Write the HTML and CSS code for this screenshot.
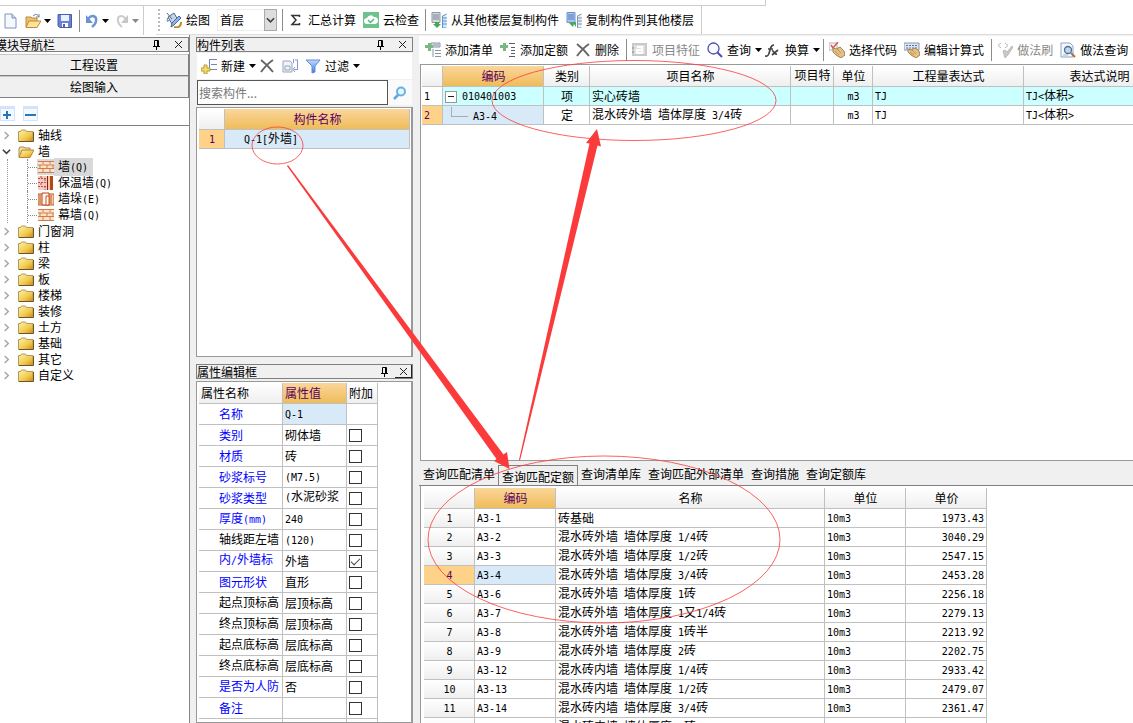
FILE: index.html
```html
<!DOCTYPE html>
<html lang="zh-CN">
<head>
<meta charset="utf-8">
<title>构件列表</title>
<link rel="stylesheet" href="styles.css">
</head>
<body>
<svg class="defs" width="0" height="0" aria-hidden="true">
<defs>
<linearGradient id="gold" x1="0" y1="0" x2="1" y2="1"><stop offset="0" stop-color="#fff3a8"/><stop offset=".6" stop-color="#f2c84e"/><stop offset="1" stop-color="#c98a1c"/></linearGradient>
<linearGradient id="blue" x1="0" y1="0" x2="0" y2="1"><stop offset="0" stop-color="#c5dcf8"/><stop offset="1" stop-color="#3f78d8"/></linearGradient>
<symbol id="folder" viewBox="0 0 16 14"><path d="M.5 12.500v-10h2l1-1.500h4l1 1.500H15v10z" fill="url(#gold)" stroke="#b29a55"/><path d="M1 12.500h14.500V3" fill="none" stroke="#70561d"/></symbol>
<symbol id="folder-open" viewBox="0 0 16 14"><path d="M1 12V3l1-1h4l1 1h5v2" fill="#f5dda0" stroke="#a98d48"/><path d="M1 12.5L4 5h12l-4 7.500z" fill="url(#gold)" stroke="#b28830"/></symbol>
<symbol id="chev" viewBox="0 0 8 10"><path d="M2 1l4 4-4 4" fill="none" stroke="#a6a6a6" stroke-width="1.600"/></symbol>
<symbol id="chev-down" viewBox="0 0 10 8"><path d="M1 2l4 4 4-4" fill="none" stroke="#404040" stroke-width="1.800"/></symbol>
<symbol id="bricks" viewBox="0 0 16 14"><path d="M0 1h16v12H0z" fill="#fbe3c8"/><path d="M0 1.500h16M0 5h16M0 8.500h16M0 12.500h16M5 1v3M12 1v3M2 5v3M9 5v3M15 5v3M5 9v3M12 9v3" stroke="#d07a50" fill="none"/></symbol>
<symbol id="bricks-insulated" viewBox="0 0 16 14"><path d="M0 0h10v14H0z" fill="#f3cdc0"/><path d="M0 2.500h9M0 6.500h9M0 10.500h9M3 0v3M7 3v3M3 7v3M7 10v4" stroke="#b84a4a" stroke-dasharray="2 1"/><path d="M10 0h2v14h-2z" fill="#f4c9a0"/><path d="M12 0h3v14h-3z" fill="#b8481c"/><path d="M9.500 0v14" stroke="#8c1c1c"/></symbol>
<symbol id="pier" viewBox="0 0 16 14"><path d="M0 2h16v11H0z" fill="#f5cda5" stroke="#bd5a2c"/><path d="M4 1h7v12H4z" fill="#fff3ea" stroke="#b04a20"/><path d="M8 4h3v9H8zM13 3v9M2 3v9" fill="#fff" stroke="#c8552a"/></symbol>
<symbol id="cross" viewBox="0 0 16 16"><path d="M2 2c4 3 8 7 12 12M14 2C9 5 5 10 2 14" fill="none" stroke="#666" stroke-width="2"/></symbol>
<symbol id="caret" viewBox="0 0 7 4"><path d="M0 0h7L3.500 4z" fill="currentColor"/></symbol>
<symbol id="pin" viewBox="0 0 9 10"><path d="M2.500 6V.5h4V6M5.500 1v5M1 6.500h7M4.500 7v3" fill="none" stroke="#000"/></symbol>
<symbol id="close" viewBox="0 0 9 9"><path d="M1 1l7 7M8 1L1 8" fill="none" stroke="#222"/></symbol>
<symbol id="new" viewBox="0 0 16 16"><path d="M3 1h7l4 4v10H3z" fill="#f4f9ff" stroke="#8095b5"/><path d="M10 1v4h4" fill="#c9d8ee" stroke="#8095b5"/></symbol>
<symbol id="open" viewBox="0 0 16 16"><path d="M1 14V4h5l1 1h5v3" fill="#eec06a" stroke="#c0883c"/><path d="M1 14.500L4 8h12l-4 6.500z" fill="#ffe39a" stroke="#c0883c"/><path d="M8 3c3-3 5-1 6 1M14 1v3h-3" fill="none" stroke="#6a86a8"/></symbol>
<symbol id="save" viewBox="0 0 16 16"><path d="M1 1.500h13.500v13H3L1 13z" fill="#6b80d4" stroke="#4c5cac"/><path d="M4 2h8v6H4z" fill="#e8f0fc"/><path d="M5 10h6v4H5z" fill="#fff"/><path d="M6 11h2v3H6z" fill="#4c60b4"/></symbol>
<symbol id="undo" viewBox="0 0 14 14"><path d="M3 5c4-5 9-3 8 2 0 3-3 5-4 6" fill="none" stroke="#6c92d4" stroke-width="2.400"/><path d="M1 1v8h7z" fill="#6c92d4"/></symbol>
<symbol id="redo" viewBox="0 0 14 14"><path d="M11 5C7 0 2 2 3 7c0 3 3 5 4 6" fill="none" stroke="#ccc" stroke-width="2"/><path d="M13 1v8H6z" fill="#c6c6c6"/></symbol>
<symbol id="paint" viewBox="0 0 16 16"><path d="M2 5l6-4 4 7-6 4z" fill="#c4d3e8" stroke="#52698c"/><path d="M1 1l5 6M2 6c-2 3 0 5 1 2" fill="none" stroke="#52698c"/><path d="M15 6l-7 7-3 2 1-4 7-7z" fill="#90b4e4" stroke="#44699f"/><path d="M8 15c4 1 7 0 7-5" fill="none" stroke="#c48b36" stroke-width="2"/></symbol>
<symbol id="sigma" viewBox="0 0 16 16"><path d="M11.500 5V3.500H4L8 8l-4 4.500h7.500V11" fill="none" stroke="#333" stroke-width="1.500"/></symbol>
<symbol id="cloud" viewBox="0 0 16 16"><path d="M0 0h16v16H0z" fill="#6cc48c"/><path d="M4 12a3 3 0 0 1 0-6 4 4 0 0 1 7-1 3.500 3.500 0 0 1 1 7z" fill="#fff"/><path d="M5 8l2.500 2.500L11 7" fill="none" stroke="#55bb7c" stroke-width="1.500"/></symbol>
<symbol id="floor-copy" viewBox="0 0 16 16"><path d="M1 .5h8v10H1z" fill="#d5dae0" stroke="#8e979f"/><path d="M2 3h6M2 5h6M2 7h6" stroke="#7b848e"/><path d="M15.500 2l-4 2v12h4M12 6h4M12 9h4M12 12h4" fill="#d4e6fa" stroke="#5f93ce"/><path d="M4 10v2H2l4 4 4-4H8v-2z" fill="#46a85c"/></symbol>
<symbol id="floor-paste" viewBox="0 0 16 16"><path d="M1 .5h8v10H1z" fill="#a9c5ef" stroke="#6d92cc"/><path d="M2 3h6M2 5h6M2 7h6" stroke="#587fbd"/><path d="M15.500 2l-4 2v12h4M12 6h4M12 9h4M12 12h4" fill="#e4edf6" stroke="#7e93ad"/><path d="M3 11l4 4 1-3 2 3v-5H7z" fill="#46a85c"/></symbol>
<symbol id="add-list" viewBox="0 0 16 16"><path d="M6 1h9v4H6z" fill="#dfe5ee" stroke="#8894a8"/><path d="M8 3h6M10 8.500h6M10 11.500h6M10 14.500h6M8 7v8" stroke="#8994a5"/><path d="M3 1h3v2h2v3H6v3H3V6H0V3h3z" fill="#79b981"/></symbol>
<symbol id="add-quota" viewBox="0 0 16 16"><path d="M9 1.500h6M11 5.500h4M11 8.500h4M11 11.500h4M9 14.500h6" stroke="#555d69"/><path d="M3 1h3v2h2v3H6v3H3V6H0V3h3z" fill="#79b981"/></symbol>
<symbol id="feature" viewBox="0 0 16 16"><path d="M0 1h15v13H0z" fill="#c9c9c9"/><path d="M2 3h11v9H2z" fill="#e0e0e0"/><path d="M5 5h5v6H5V8h4" fill="none" stroke="#fff" stroke-width="2"/><path d="M0 5h2v2H0zM0 9h2v2H0z" fill="#aaa"/></symbol>
<symbol id="search" viewBox="0 0 16 16"><circle cx="6.500" cy="6.500" r="5.500" fill="#fafaff" stroke="#4c50b0" stroke-width="1.300"/><path d="M10.500 10.500L15 15" stroke="#4c50b0" stroke-width="2"/></symbol>
<symbol id="fx" viewBox="0 0 16 16"><path d="M0 14c4 1 4-3 5-6s1-5 4-5M3 7h5M7 9c2-1 2 4 5 3M13 8l-6 5" fill="none" stroke="#444" stroke-width="1.700"/></symbol>
<symbol id="hand-code" viewBox="0 0 16 16"><path d="M0 1h8v7H0z" fill="#f3f6fb" stroke="#abb8c9"/><path d="M2 3l2 3 5-6" fill="none" stroke="#dc5a48" stroke-width="1.500"/><path d="M4 6l3 1 4-2 4 4 1 4-4 3-5-3-3-3z" fill="#e4c184" stroke="#a68352"/><path d="M6 9l4 4M8 7l4 4" stroke="#b99256"/></symbol>
<symbol id="hand-edit" viewBox="0 0 16 16"><path d="M0 1h15v7H0z" fill="#dce5f3" stroke="#8399b8"/><path d="M2 3.500h11M2 6h11" stroke="#5d7598" stroke-dasharray="2 1"/><path d="M4 7l3 1 4-2 4 3 1 4-4 3-5-3-3-3z" fill="#e4c184" stroke="#a68352"/><path d="M6 10l4 3M8 8l4 4" stroke="#b99256"/></symbol>
<symbol id="brush" viewBox="0 0 16 16"><path d="M4 1L1 3.500 4 6M8 1l3 2.500L8 6" fill="none" stroke="#b6b6b6"/><path d="M6 9l2-1 2 2 5-6 1 1-5 8-3 3z" fill="#c8c8c8" stroke="#bcbcbc"/></symbol>
<symbol id="page-search" viewBox="0 0 16 16"><path d="M2 1h8l3 3v11H1V1z" fill="#f4f9ff" stroke="#8ba5ca"/><circle cx="8" cy="8" r="3.500" fill="#bcd7ee" stroke="#516d94" stroke-width="1.300"/><path d="M3 13h5" stroke="#9db4d2"/><path d="M11 11l4 4" stroke="#a8743c" stroke-width="2"/></symbol>
<symbol id="create" viewBox="0 0 16 16"><path d="M8 1.500h8M10 6.500h6M8 11.500h8M8.500 1v11" stroke="#7189ae"/><path d="M3 7h3v3h3v3H6v3H3v-3H0v-3h3z" fill="#f2dc69" stroke="#b99b35"/></symbol>
<symbol id="copy" viewBox="0 0 16 16"><path d="M1 3h7l2 2v9H1zM3 8h5v4H3z" fill="#f0f3f8" stroke="#99a5b9"/><path d="M11.500 1v4M15.500 2v10M15 11.500h-3M13 9l-2 2.500 2 2.500M13 2h3" fill="none" stroke="#829bcc"/></symbol>
<symbol id="filter" viewBox="0 0 16 16"><path d="M1 2h14L10 8v6l-3 1V8z" fill="url(#blue)" stroke="#5d8ede"/></symbol>
<symbol id="find" viewBox="0 0 16 16"><path d="M7 9l-5 5" stroke="#5ba7df" stroke-width="2.500"/><circle cx="9" cy="6.500" r="4" fill="#eaf6ff" stroke="#64b0e8" stroke-width="2"/></symbol>
</defs>
</svg>

<div class="menu-edge"></div>
<header class="bars">
  <div class="toolbar file-bar">
    <button class="tool" aria-label="新建文件"><svg class="ic"><use href="#new"/></svg></button>
    <button class="tool tight" aria-label="打开"><svg class="ic"><use href="#open"/></svg><svg class="caret"><use href="#caret"/></svg></button>
    <button class="tool" aria-label="保存"><svg class="ic"><use href="#save"/></svg></button>
    <span class="sep"></span>
    <button class="tool tight" aria-label="撤销"><svg class="ic small"><use href="#undo"/></svg><svg class="caret"><use href="#caret"/></svg></button>
    <button class="tool tight dim" aria-label="恢复"><svg class="ic small"><use href="#redo"/></svg><svg class="caret"><use href="#caret"/></svg></button>
  </div>
  <div class="toolbar draw-bar">
    <span class="grip"></span>
    <button class="tool"><svg class="ic"><use href="#paint"/></svg>绘图</button>
    <span class="floor"><select aria-label="楼层"><option>首层</option></select><svg class="floor-arrow"><use href="#chev-down"/></svg></span>
    <span class="sep"></span>
    <button class="tool"><svg class="ic"><use href="#sigma"/></svg>汇总计算</button>
    <button class="tool"><svg class="ic"><use href="#cloud"/></svg>云检查</button>
    <span class="sep"></span>
    <button class="tool"><svg class="ic"><use href="#floor-copy"/></svg>从其他楼层复制构件</button>
    <button class="tool"><svg class="ic"><use href="#floor-paste"/></svg>复制构件到其他楼层</button>
  </div>
</header>

<main class="work">
  <aside class="nav">
    <div class="title nav-title"><h2>模块导航栏</h2><button aria-label="固定"><svg class="pin"><use href="#pin"/></svg></button><button aria-label="关闭"><svg class="close"><use href="#close"/></svg></button></div>
    <button class="section">工程设置</button>
    <button class="section">绘图输入</button>
    <div class="fold">
      <button aria-label="全部展开"><svg viewBox="0 0 15 15"><path d="M0 0h15v15H0z" fill="#d4e3fb"/><path d="M1 3h13v11H1z" fill="#f4f8ff"/><path d="M7 5v8M3 9h8" stroke="#2677b8" stroke-width="2"/></svg></button>
      <button aria-label="全部折叠"><svg viewBox="0 0 15 15"><path d="M0 0h15v15H0z" fill="#d4e3fb"/><path d="M1 3h13v11H1z" fill="#f4f8ff"/><path d="M2 9h11" stroke="#2677b8" stroke-width="2"/></svg></button>
    </div>
    <ul class="tree">
      <li><svg class="chev"><use href="#chev"/></svg><svg class="fi"><use href="#folder"/></svg>轴线</li>
      <li><svg class="chev"><use href="#chev-down"/></svg><svg class="fi"><use href="#folder-open"/></svg>墙
        <ul class="branch">
          <li class="picked"><svg class="fi"><use href="#bricks"/></svg><span class="label">墙<span class="n">(Q)</span></span></li>
          <li><svg class="fi"><use href="#bricks-insulated"/></svg><span class="label">保温墙<span class="n">(Q)</span></span></li>
          <li><svg class="fi"><use href="#pier"/></svg><span class="label">墙垛<span class="n">(E)</span></span></li>
          <li><svg class="fi"><use href="#bricks"/></svg><span class="label">幕墙<span class="n">(Q)</span></span></li>
        </ul>
      </li>
      <li><svg class="chev"><use href="#chev"/></svg><svg class="fi"><use href="#folder"/></svg>门窗洞</li>
      <li><svg class="chev"><use href="#chev"/></svg><svg class="fi"><use href="#folder"/></svg>柱</li>
      <li><svg class="chev"><use href="#chev"/></svg><svg class="fi"><use href="#folder"/></svg>梁</li>
      <li><svg class="chev"><use href="#chev"/></svg><svg class="fi"><use href="#folder"/></svg>板</li>
      <li><svg class="chev"><use href="#chev"/></svg><svg class="fi"><use href="#folder"/></svg>楼梯</li>
      <li><svg class="chev"><use href="#chev"/></svg><svg class="fi"><use href="#folder"/></svg>装修</li>
      <li><svg class="chev"><use href="#chev"/></svg><svg class="fi"><use href="#folder"/></svg>土方</li>
      <li><svg class="chev"><use href="#chev"/></svg><svg class="fi"><use href="#folder"/></svg>基础</li>
      <li><svg class="chev"><use href="#chev"/></svg><svg class="fi"><use href="#folder"/></svg>其它</li>
      <li><svg class="chev"><use href="#chev"/></svg><svg class="fi"><use href="#folder"/></svg>自定义</li>
    </ul>
  </aside>

  <div class="middle">
    <section class="dock">
      <div class="title"><h2>构件列表</h2><button aria-label="固定"><svg class="pin"><use href="#pin"/></svg></button><button aria-label="关闭"><svg class="close"><use href="#close"/></svg></button></div>
      <div class="toolbar list-bar">
        <button class="tool split"><svg class="ic"><use href="#create"/></svg>新建<svg class="caret"><use href="#caret"/></svg></button>
        <button class="tool" aria-label="删除构件"><svg class="ic"><use href="#cross"/></svg></button>
        <button class="tool" aria-label="复制"><svg class="ic"><use href="#copy"/></svg></button>
        <button class="tool"><svg class="ic"><use href="#filter"/></svg>过滤<svg class="caret"><use href="#caret"/></svg></button>
      </div>
      <div class="find"><input type="text" aria-label="搜索构件" placeholder="搜索构件..."><button aria-label="搜索"><svg class="ic"><use href="#find"/></svg></button></div>
      <div class="sheet">
        <table class="grid parts">
          <colgroup><col class="w26"><col></colgroup>
          <thead><tr><th></th><th class="hot">构件名称</th></tr></thead>
          <tbody><tr><th class="hot-row"><span class="n">1</span></th><td class="sel"><span class="n">Q-1[</span>外墙<span class="n">]</span></td></tr></tbody>
        </table>
      </div>
    </section>
    <section class="dock">
      <div class="title raised"><h2>属性编辑框</h2><button aria-label="固定"><svg class="pin"><use href="#pin"/></svg></button><button class="boxed" aria-label="关闭"><svg class="close"><use href="#close"/></svg></button></div>
      <div class="sheet">
        <table class="grid props">
          <colgroup><col class="w84"><col class="w64"><col class="w31"></colgroup>
          <thead><tr><th>属性名称</th><th class="hot">属性值</th><th>附加</th></tr></thead>
          <tbody>
            <tr><th>名称</th><td class="sel"><span class="n">Q-1</span></td><td></td></tr>
            <tr><th>类别</th><td>砌体墙</td><td><input type="checkbox" aria-label="附加 类别"></td></tr>
            <tr><th>材质</th><td>砖</td><td><input type="checkbox" aria-label="附加 材质"></td></tr>
            <tr><th>砂浆标号</th><td><span class="n">(M7.5)</span></td><td><input type="checkbox" aria-label="附加 砂浆标号"></td></tr>
            <tr><th>砂浆类型</th><td class="upper"><span class="n">(</span>水泥砂浆</td><td><input type="checkbox" aria-label="附加 砂浆类型"></td></tr>
            <tr><th>厚度<span class="n">(mm)</span></th><td><span class="n">240</span></td><td><input type="checkbox" aria-label="附加 厚度"></td></tr>
            <tr><th class="plain upper">轴线距左墙</th><td><span class="n">(120)</span></td><td><input type="checkbox" aria-label="附加 轴线距左墙"></td></tr>
            <tr><th class="upper">内<span class="n">/</span>外墙标</th><td>外墙</td><td><input type="checkbox" aria-label="附加 内/外墙标" checked></td></tr>
            <tr><th>图元形状</th><td>直形</td><td><input type="checkbox" aria-label="附加 图元形状"></td></tr>
            <tr><th class="plain upper">起点顶标高</th><td>层顶标高</td><td><input type="checkbox" aria-label="附加 起点顶标高"></td></tr>
            <tr><th class="plain upper">终点顶标高</th><td>层顶标高</td><td><input type="checkbox" aria-label="附加 终点顶标高"></td></tr>
            <tr><th class="plain upper">起点底标高</th><td>层底标高</td><td><input type="checkbox" aria-label="附加 起点底标高"></td></tr>
            <tr><th class="plain upper">终点底标高</th><td>层底标高</td><td><input type="checkbox" aria-label="附加 终点底标高"></td></tr>
            <tr><th class="upper">是否为人防</th><td>否</td><td><input type="checkbox" aria-label="附加 是否为人防"></td></tr>
            <tr><th>备注</th><td></td><td><input type="checkbox" aria-label="附加 备注"></td></tr>
            <tr><th></th><td></td><td></td></tr>
          </tbody>
        </table>
      </div>
    </section>
  </div>

  <div class="right">
    <div class="toolbar item-bar">
      <button class="tool"><svg class="ic"><use href="#add-list"/></svg>添加清单</button>
      <button class="tool"><svg class="ic"><use href="#add-quota"/></svg>添加定额</button>
      <button class="tool"><svg class="ic"><use href="#cross"/></svg>删除</button>
      <span class="sep"></span>
      <button class="tool dim"><svg class="ic"><use href="#feature"/></svg>项目特征</button>
      <button class="tool split"><svg class="ic"><use href="#search"/></svg>查询<svg class="caret"><use href="#caret"/></svg></button>
      <button class="tool split"><svg class="ic"><use href="#fx"/></svg>换算<svg class="caret"><use href="#caret"/></svg></button>
      <span class="sep"></span>
      <button class="tool"><svg class="ic"><use href="#hand-code"/></svg>选择代码</button>
      <button class="tool"><svg class="ic"><use href="#hand-edit"/></svg>编辑计算式</button>
      <span class="sep"></span>
      <button class="tool dim"><svg class="ic"><use href="#brush"/></svg>做法刷</button>
      <button class="tool"><svg class="ic"><use href="#page-search"/></svg>做法查询</button>
    </div>
    <section class="items">
      <table class="grid bill">
        <colgroup><col class="w21"><col class="w101"><col class="w46"><col class="w201"><col class="w43"><col class="w39"><col class="w151"><col class="w151"></colgroup>
        <thead><tr><th></th><th class="hot">编码</th><th>类别</th><th>项目名称</th><th class="upper">项目特</th><th>单位</th><th>工程量表达式</th><th>表达式说明</th></tr></thead>
        <tbody>
          <tr class="cyan"><th class="idx"><span class="n">1</span></th><td class="code"><button class="toggle" aria-label="折叠"></button><span class="n">010401003</span></td><td class="mid">项</td><td>实心砖墙</td><td></td><td class="mid"><span class="n">m3</span></td><td><span class="n">TJ</span></td><td><span class="n">TJ&lt;</span>体积<span class="n">&gt;</span></td></tr>
          <tr><th class="idx hot-row"><span class="n">2</span></th><td class="code sel"><span class="elbow"></span><span class="n">A3-4</span></td><td class="mid">定</td><td>混水砖外墙<span class="n"> </span>墙体厚度<span class="n"> 3/4</span>砖</td><td></td><td class="mid"><span class="n">m3</span></td><td><span class="n">TJ</span></td><td><span class="n">TJ&lt;</span>体积<span class="n">&gt;</span></td></tr>
        </tbody>
      </table>
    </section>
    <section class="lookup">
      <nav class="tabs">
        <button>查询匹配清单</button><button class="on">查询匹配定额</button><button>查询清单库</button><button>查询匹配外部清单</button><button>查询措施</button><button>查询定额库</button>
      </nav>
      <div class="results">
        <table class="grid quota">
          <colgroup><col class="w51"><col class="w81"><col class="w269"><col class="w81"><col class="w81"></colgroup>
          <thead><tr><th></th><th class="hot">编码</th><th>名称</th><th>单位</th><th>单价</th></tr></thead>
          <tbody>
            <tr><th><span class="n">1</span></th><td><span class="n">A3-1</span></td><td>砖基础</td><td><span class="n">10m3</span></td><td class="num"><span class="n">1973.43</span></td></tr>
            <tr><th><span class="n">2</span></th><td><span class="n">A3-2</span></td><td>混水砖外墙<span class="n"> </span>墙体厚度<span class="n"> 1/4</span>砖</td><td><span class="n">10m3</span></td><td class="num"><span class="n">3040.29</span></td></tr>
            <tr><th><span class="n">3</span></th><td><span class="n">A3-3</span></td><td>混水砖外墙<span class="n"> </span>墙体厚度<span class="n"> 1/2</span>砖</td><td><span class="n">10m3</span></td><td class="num"><span class="n">2547.15</span></td></tr>
            <tr><th class="hot-row"><span class="n">4</span></th><td class="sel"><span class="n">A3-4</span></td><td>混水砖外墙<span class="n"> </span>墙体厚度<span class="n"> 3/4</span>砖</td><td><span class="n">10m3</span></td><td class="num"><span class="n">2453.28</span></td></tr>
            <tr><th><span class="n">5</span></th><td><span class="n">A3-6</span></td><td>混水砖外墙<span class="n"> </span>墙体厚度<span class="n"> 1</span>砖</td><td><span class="n">10m3</span></td><td class="num"><span class="n">2256.18</span></td></tr>
            <tr><th><span class="n">6</span></th><td><span class="n">A3-7</span></td><td>混水砖外墙<span class="n"> </span>墙体厚度<span class="n"> 1</span>又<span class="n">1/4</span>砖</td><td><span class="n">10m3</span></td><td class="num"><span class="n">2279.13</span></td></tr>
            <tr><th><span class="n">7</span></th><td><span class="n">A3-8</span></td><td>混水砖外墙<span class="n"> </span>墙体厚度<span class="n"> 1</span>砖半</td><td><span class="n">10m3</span></td><td class="num"><span class="n">2213.92</span></td></tr>
            <tr><th><span class="n">8</span></th><td><span class="n">A3-9</span></td><td>混水砖外墙<span class="n"> </span>墙体厚度<span class="n"> 2</span>砖</td><td><span class="n">10m3</span></td><td class="num"><span class="n">2202.75</span></td></tr>
            <tr><th><span class="n">9</span></th><td><span class="n">A3-12</span></td><td>混水砖内墙<span class="n"> </span>墙体厚度<span class="n"> 1/4</span>砖</td><td><span class="n">10m3</span></td><td class="num"><span class="n">2933.42</span></td></tr>
            <tr><th><span class="n">10</span></th><td><span class="n">A3-13</span></td><td>混水砖内墙<span class="n"> </span>墙体厚度<span class="n"> 1/2</span>砖</td><td><span class="n">10m3</span></td><td class="num"><span class="n">2479.07</span></td></tr>
            <tr><th><span class="n">11</span></th><td><span class="n">A3-14</span></td><td>混水砖内墙<span class="n"> </span>墙体厚度<span class="n"> 3/4</span>砖</td><td><span class="n">10m3</span></td><td class="num"><span class="n">2361.47</span></td></tr>
            <tr><th></th><td></td><td>混水砖内墙<span class="n"> </span>墙体厚度<span class="n"> 1</span>砖</td><td></td><td></td></tr>
          </tbody>
        </table>
      </div>
    </section>
  </div>
</main>

<svg class="marks" width="1133" height="723" viewBox="0 0 1133 723" aria-hidden="true">
  <g fill="none" stroke="#fb3b3b" stroke-opacity=".8">
    <ellipse cx="277.500" cy="145.500" rx="25.500" ry="18.500"/>
    <ellipse cx="634" cy="100.500" rx="142" ry="40"/>
    <ellipse cx="604" cy="539.500" rx="176" ry="83.500"/>
  </g>
  <path d="M287 166l209.500 293-2.500 2 15.500 8-2.500-17-3.500 2.500L288 165z" fill="#fb3b3b"/>
  <path d="M519 460l70.500-316.500-3.500-.5 11-14 4 17.500-3.500-1L520 460.500z" fill="#fb3b3b"/>
</svg>
</body>
</html>
```
FILE: styles.css
```css
* { box-sizing: border-box; }
body { margin: 0; height: 100vh; display: flex; flex-direction: column; overflow: hidden; background: #fff; color: #000; font: 12px/14px "Noto Sans CJK SC", sans-serif; }
button, input, select { font: inherit; color: inherit; margin: 0; padding: 0; border: 0; background: none; }
h2 { margin: 0; font: inherit; }
.defs { position: absolute; }
.n { font-family: "DejaVu Sans Mono", monospace; font-size: 10px; white-space: pre; }

.menu-edge { flex: none; width: 766px; height: 6px; border: solid #ccc; border-width: 0 1px 1px 0; }
.bars { flex: none; display: flex; height: 29px; }
.toolbar { display: flex; align-items: center; gap: 6px; white-space: nowrap; }
.file-bar { width: 144px; padding-left: 2px; border-right: 1px solid #ccc; }
.draw-bar { flex: 1; margin-left: 12px; padding-left: 2px; border-bottom: 1px solid #ddd; }
.draw-bar::after { content: ""; width: 1px; align-self: stretch; background: #ccc; }
.tool { display: flex; align-items: center; gap: 4px; padding-right: 1px; flex: none; }
.tool.tight { gap: 3px; padding: 0; }
.tool.split { margin-right: -4px; }
.dim { color: #888; }
.ic { width: 16px; height: 16px; flex: none; }
.ic.small { width: 14px; height: 14px; }
.caret { width: 7px; height: 4px; flex: none; }
.sep { width: 1px; height: 22px; margin: 0 -1px; background: #8c8c8c; flex: none; }
.grip { width: 2px; height: 22px; background: repeating-linear-gradient(#bbb 0 2px, #fff 2px 4px); }
.floor { position: relative; width: 60px; height: 22px; }
.floor select { width: 100%; height: 100%; padding-left: 2px; border: 1px solid #eee; appearance: none; }
.floor-arrow { position: absolute; right: 0; top: 0; width: 13px; height: 22px; padding: 1px; background: #ddd; border: 1px solid #aaa; pointer-events: none; }

.work { flex: 1; min-height: 0; display: grid; grid-template-columns: 190px 217px 1fr; column-gap: 6px; background: #f0f0f0; }
.nav, .middle, .right { min-width: 0; min-height: 0; }
.nav { display: flex; flex-direction: column; padding-top: 2px; background: #fff; border-right: 1px solid #85858d; }
.title { flex: none; display: flex; align-items: center; gap: 13px; height: 15px; padding-right: 5px; background: #f0f0f0; border: 1px solid #808080; }
.title h2 { flex: 1; white-space: nowrap; line-height: 12px; }
.title button { display: flex; }
.nav-title { margin-bottom: 2px; border-left: 0; }
.nav-title h2 { margin-left: -5px; }
.pin { width: 9px; height: 10px; }
.close { width: 9px; height: 9px; }
.section { flex: none; height: 22px; background: #f0f0f0; border: solid #808080; border-width: 0 1px 1px 0; box-shadow: inset 0 1px #c8c8c8; }
.fold { flex: none; display: flex; gap: 8px; height: 28px; padding-top: 8px; border-bottom: 1px solid #808080; }
.fold button, .fold svg { display: block; width: 15px; height: 15px; }

.tree { flex: 1; min-height: 0; overflow: hidden; margin: 0; padding: 1px 0 0 2px; list-style: none; line-height: 16px; }
.tree ul { list-style: none; }
.tree svg { vertical-align: middle; }
.chev { width: 9px; height: 9px; margin-right: 7px; margin-top: -2px; }
.fi { width: 16px; height: 14px; margin-right: 4px; margin-top: -2px; }
.tree > li { white-space: nowrap; }
.branch { margin: 0 0 0 5px; padding: 0 0 0 19px; border-left: 1px dotted #999; }
.branch li { display: flex; align-items: center; height: 16px; border-left: 1px dotted #888; }
.branch li::before { content: ""; width: 9px; border-top: 1px dotted #888; }
.branch .fi { width: 17px; margin: 0; padding-left: 1px; }
.branch .label { padding: 0 5px 0 4px; }
.picked .label, .picked .fi { background: #d9d9d9; }
.picked .fi { height: 16px; }

.middle { display: grid; grid-template-rows: 323fr 365fr; }
.dock { display: flex; flex-direction: column; min-height: 0; overflow: hidden; padding: 2px 0 1px; }
.dock + .dock { padding-top: 6px; padding-bottom: 0; }
.list-bar { flex: none; height: 26px; margin: 1px 1px 0; padding-left: 4px; background: #fff; }
.find { flex: none; display: flex; height: 25px; margin: 1px 1px 2px; }
.find input { flex: 1; min-width: 0; padding: 0 1px; background: #fff; border: 1px solid #555; }
.find input::placeholder { color: #777; opacity: 1; }
.find button { width: 24px; display: flex; align-items: center; justify-content: center; background: #fafafa; }
.sheet { flex: 1; min-height: 0; overflow: hidden; padding: 1px 1px 0 2px; background: #fff; border: solid #999; border-width: 1px 2px 1px 1px; }
.raised { margin-bottom: 2px; padding-right: 0; }
.raised button { height: 13px; align-items: center; }
.boxed { width: 17px; margin-left: -7px; justify-content: center; border: solid #222; border-width: 0 1px 1px 0; }

.grid { table-layout: fixed; border-collapse: separate; border-spacing: 0; white-space: nowrap; }
.grid th, .grid td { height: 19px; padding: 0 1px 0 2px; overflow: hidden; font-weight: normal; text-align: left; line-height: 14px; border: solid #c0c0c0; border-width: 0 1px 1px 0; }
.grid thead th { height: 21px; text-align: center; background: linear-gradient(#fff, #efefef); }
.grid tbody th { text-align: center; background: linear-gradient(#fff, #efefef); }
.grid thead .hot { color: #5a0060; background: linear-gradient(#fbd69a, #efbc5a); }
.grid tbody .hot-row { color: #5a0060; background: #ffd28a; }
.grid td.sel { background: #d8e9f8; }
.grid .upper { padding-bottom: 3px; }
.grid .mid { text-align: center; }
.grid .num { text-align: right; padding-right: 2px; }
.w21 { width: 21px; } .w26 { width: 26px; } .w31 { width: 31px; } .w39 { width: 39px; } .w43 { width: 43px; } .w46 { width: 46px; }
.w51 { width: 51px; } .w64 { width: 64px; } .w81 { width: 81px; } .w84 { width: 84px; } .w101 { width: 101px; }
.w151 { width: 151px; } .w201 { width: 201px; } .w269 { width: 269px; }
.parts { width: 211px; }
.parts tbody td { padding-left: 19px; }
.props { width: 179px; }
.grid.props thead th { text-align: left; }
.props tbody th, .props tbody td { height: 21px; }
.props tbody th { padding-left: 20px; text-align: left; color: #00f; background: #fff; }
.props tbody .plain { color: #000; }
.props input { display: block; width: 13px; height: 13px; appearance: none; background: #fff; border: 1px solid #333; }
.props input:checked::after { content: ""; display: block; width: 8px; height: 4px; margin: 2px 0 0 1px; border: solid #444; border-width: 0 0 1px 1px; transform: rotate(-45deg); }

.right { display: grid; grid-template-rows: 29px 397fr 262fr; overflow: hidden; }
.item-bar { padding-left: 6px; background: #fff; margin-top: 1px; }
.item-bar .sep { margin: 0 -1px 0 0; }
.items { min-height: 0; overflow: hidden; margin-left: 1px; padding: 1px 0 0 1px; background: #fff; border: solid #999; border-width: 1px 0 1px 1px; }
.bill { width: 753px; }
.bill .cyan td { background: #cff; }
.bill .idx { padding: 0 12px 0 2px; text-align: left; overflow: visible; }
.bill tbody .idx:not(.hot-row) { background: #fff; }
.bill .code { padding-left: 2px; }
.toggle { width: 12px; height: 12px; margin-right: 5px; vertical-align: middle; background: linear-gradient(#222, #222) center / 6px 1px no-repeat #fff; border: 1px solid #999; }
.elbow { display: inline-block; width: 17px; height: 10px; margin: 0 5px 0 6px; vertical-align: 3px; border: solid #aaa; border-width: 0 0 1px 1px; }
.lookup { display: flex; flex-direction: column; min-height: 0; overflow: hidden; }
.tabs { flex: none; display: flex; align-items: flex-start; gap: 7px; height: 25px; padding: 4px 0 0 4px; border-bottom: 1px solid #808088; }
.tabs button { height: 18px; white-space: nowrap; }
.tabs .on { height: 20px; margin: 0 -4px; padding: 2px 3px 0; border: 1px solid #808080; border-bottom: 0; }
.results { flex: 1; min-height: 0; overflow: hidden; margin-left: 1px; padding: 2px 0 0 3px; background: #fff; border-left: 1px solid #999; }
.quota { width: 563px; }

.marks { position: absolute; left: 0; top: 0; pointer-events: none; }
```
